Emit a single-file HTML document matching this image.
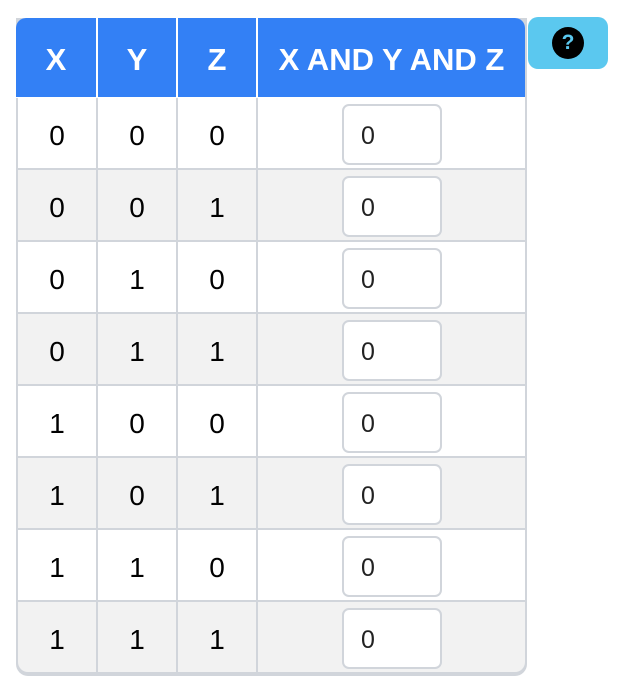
<!DOCTYPE html>
<html><head><style>
html,body{margin:0;padding:0;background:#fff;width:624px;height:694px;overflow:hidden;font-family:"Liberation Sans",sans-serif;}
.a{position:absolute;}
.hd{background:#3380f5;color:#fff;font-weight:bold;font-size:31px;display:flex;align-items:center;justify-content:center;top:18px;height:79px;padding-top:4px;box-sizing:border-box;}
.cell{display:flex;align-items:center;justify-content:center;font-size:28px;color:#000;padding-top:5px;box-sizing:border-box;}
.inp{position:absolute;left:342px;width:96px;height:57px;border:2px solid #d1d5db;border-radius:7px;background:#fff;font-size:25px;color:#222;box-sizing:content-box;}
.inp span{position:absolute;left:17px;top:16px;}
</style></head><body>
<div class="a" style="left:16px;top:18px;width:511px;height:658px;background:#d1d5db;border-radius:0 0 12px 12px;"></div>
<div class="a" style="left:16px;top:18px;width:509px;height:80px;background:#fff;border-radius:10px 10px 0 0;"></div>
<div class="a hd" style="left:16px;width:80px;border-top-left-radius:10px;">X</div>
<div class="a hd" style="left:98px;width:78px;">Y</div>
<div class="a hd" style="left:178px;width:78px;">Z</div>
<div class="a hd" style="left:258px;width:267px;border-top-right-radius:10px;">X AND Y AND Z</div>
<div id="rows"></div>
<div class="a" style="left:528px;top:17px;width:80px;height:52px;background:#5bc8ef;border-radius:10px;">
<div class="a" style="left:24px;top:10px;width:32px;height:32px;background:#000;border-radius:50%;color:#5bc8ef;font-weight:bold;font-size:21px;text-align:center;line-height:32px;">?</div>
</div>
<script>
var h='';var v=['000','001','010','011','100','101','110','111'];
for(var i=0;i<8;i++){var t=98+i*72;var bg=i%2?'#f2f2f2':'#fff';
var ht=70;
h+='<div class="a cell" style="left:18px;top:'+t+'px;width:78px;height:'+ht+'px;background:'+bg+(i==7?';border-bottom-left-radius:10px':'')+'">'+v[i][0]+'</div>';
h+='<div class="a cell" style="left:98px;top:'+t+'px;width:78px;height:'+ht+'px;background:'+bg+'">'+v[i][1]+'</div>';
h+='<div class="a cell" style="left:178px;top:'+t+'px;width:78px;height:'+ht+'px;background:'+bg+'">'+v[i][2]+'</div>';
h+='<div class="a" style="left:258px;top:'+t+'px;width:267px;height:'+ht+'px;background:'+bg+(i==7?';border-bottom-right-radius:10px':'')+'"></div>';
h+='<div class="inp" style="top:'+(t+6)+'px"><span>0</span></div>';}
document.getElementById('rows').innerHTML=h;
</script>
</body></html>
